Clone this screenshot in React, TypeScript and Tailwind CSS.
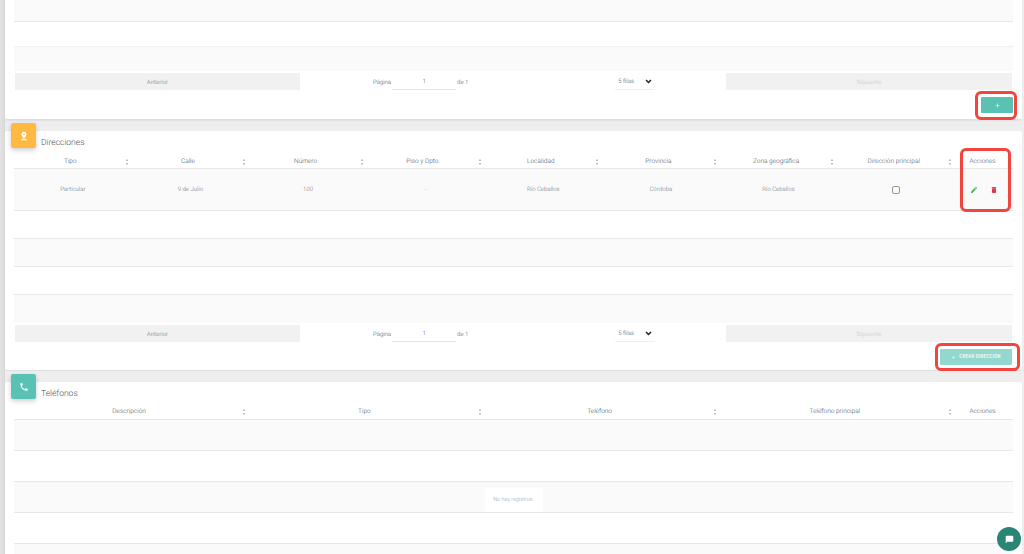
import { ReactNode } from 'react';
import { MdAdd, MdChatBubble, MdDelete, MdEdit, MdPhone, MdPinDrop } from 'react-icons/md';

const addressColumns = ['Tipo', 'Calle', 'Número', 'Piso y Dpto.', 'Localidad', 'Provincia', 'Zona geográfica', 'Dirección principal'];
const addressRow = ['Particular', '9 de Julio', '100', '-', 'Río Ceballos', 'Córdoba', 'Río Ceballos'];
const phoneColumns = ['Descripción', 'Tipo', 'Teléfono', 'Teléfono principal'];

function SortIcon() {
  return (
    <svg width="4" height="7" viewBox="0 0 4 7" className="absolute right-[3px] top-1/2 -translate-y-1/2 text-gray-400">
      <path d="M2 0.5 L3.2 2.2 H0.8 Z M2 6.5 L0.8 4.8 H3.2 Z" fill="currentColor" />
    </svg>
  );
}

function HeaderCell({ label }: { label: string }) {
  return (
    <div className="relative flex-1 pr-[5px] text-center text-[6.5px] font-light text-gray-600">
      {label}
      <SortIcon />
    </div>
  );
}

function ActionsHeader() {
  return <div className="w-[58px] pr-[3px] text-center text-[6.5px] font-light text-gray-600">Acciones</div>;
}

function EmptyRow({ height, striped, children }: { height: string; striped?: boolean; children?: ReactNode }) {
  return (
    <div className={`${height} ${striped ? 'bg-[#fafafa]' : 'bg-white'} flex items-center justify-center border-b border-[#e8e8e8]`}>
      {children}
    </div>
  );
}

function Pagination() {
  return (
    <div className="mt-[2px] flex h-[17px] items-center">
      <div className="ml-px flex h-full w-[285px] items-center justify-center bg-[#f1f1f1] pt-px text-[6px] text-gray-400">Anterior</div>
      <div className="flex h-full flex-1 items-center pt-px text-[6px] font-light text-gray-600">
        <span className="ml-[73px]">Página</span>
        <span className="ml-px flex h-[16px] w-[64px] items-center justify-center border-b border-[#e4e4e4]">1</span>
        <span className="ml-px">de 1</span>
        <div className="ml-[147px] flex h-[16px] w-[40px] items-center justify-between border-b border-[#f0f0f0] pl-[3px] pr-[3px] text-[6px]">
          <span>5 filas</span>
          <svg width="7" height="5" viewBox="0 0 7 5">
            <path d="M1 1 L3.5 3.5 L6 1" fill="none" stroke="#222" strokeWidth="1.5" />
          </svg>
        </div>
      </div>
      <div className="mr-px flex h-full w-[286px] items-center justify-center bg-[#f1f1f1] pt-px text-[6px] text-gray-300">Siguiente</div>
    </div>
  );
}

function SectionTitle({ title, tile, icon }: { title: string; tile: string; icon: ReactNode }) {
  return (
    <>
      <div className={`absolute -top-[8px] left-[6px] flex h-[25px] w-[25px] items-center justify-center rounded-[2px] text-white shadow-[0_2px_5px_rgba(0,0,0,0.2)] ${tile}`}>
        {icon}
      </div>
      <div className="pl-[27px] pt-px text-[8.5px] font-light leading-[13px] text-gray-600">{title}</div>
    </>
  );
}

export default function App() {
  return (
    <div className="relative h-[554px] overflow-hidden bg-[#eeeeee] font-['Roboto',sans-serif] [text-rendering:geometricPrecision]">
      <div className="absolute bottom-0 left-0 top-0 w-[5px] bg-gradient-to-r from-[#e4e4e4] to-[#d8d8d8]" />

      <div className="ml-[5px] mr-[2px]">
        {/* Previous section, cut off by the top of the window */}
        <section className="h-[120px] rounded-b-[2px] border-b border-[#dedede] bg-white px-[9px] shadow-[0_1px_2px_rgba(0,0,0,0.06)]">
          <EmptyRow height="h-[22px]" striped />
          <div className="h-[24px] bg-white" />
          <div className="h-[25px] border-t border-[#f0f0f0] bg-[#fafafa]" />
          <Pagination />
          <div className="mt-[7px] flex justify-end">
            <button className="flex h-[16px] w-[32px] items-center justify-center rounded-[1px] bg-[#5bc2b3] text-white">
              <MdAdd size={7} />
            </button>
          </div>
        </section>

        {/* Direcciones */}
        <section className="relative mt-[11px] h-[240px] rounded-[2px] border-b border-[#dedede] bg-white px-[9px] pt-[5px]">
          <SectionTitle title="Direcciones" tile="bg-[#fdb942]" icon={<MdPinDrop size={10} />} />
          <div className="mt-[6px] flex h-[13px] items-center border-b border-[#e8e8e8]">
            {addressColumns.map((col) => (
              <HeaderCell key={col} label={col} />
            ))}
            <ActionsHeader />
          </div>
          <div className="flex h-[42px] items-center border-b border-[#e8e8e8] bg-[#fafafa]">
            {addressRow.map((value, i) => (
              <div key={i} className="flex-1 text-center text-[6px] font-light text-gray-500">
                {value}
              </div>
            ))}
            <div className="flex flex-1 justify-center">
              <span className="flex h-[8px] w-[8px] rounded-[2px] border border-[#999999] bg-[#fdfbf0]" />
            </div>
            <div className="flex w-[58px] items-center justify-center gap-[12px]">
              <MdEdit size={8} className="text-[#43b34a]" />
              <MdDelete size={8} className="text-[#e0364a]" />
            </div>
          </div>
          <EmptyRow height="h-[28px]" />
          <EmptyRow height="h-[28px]" striped />
          <EmptyRow height="h-[28px]" />
          <div className="h-[28px] bg-[#fafafa]" />
          <Pagination />
          <div className="mt-[7px] flex justify-end pr-px">
            <button className="flex h-[16px] w-[72px] items-center justify-center gap-[3px] rounded-[1px] bg-[#93d8ce] text-[4.5px] font-medium tracking-[0.2px] text-white">
              <MdAdd size={5} />
              CREAR DIRECCIÓN
            </button>
          </div>
        </section>

        {/* Teléfonos */}
        <section className="relative mt-[11px] h-[173px] rounded-[2px] bg-white px-[9px] pt-[5px]">
          <SectionTitle title="Teléfonos" tile="bg-[#59c2b4]" icon={<MdPhone size={10} />} />
          <div className="mt-[4px] flex h-[15px] items-center border-b border-[#e8e8e8]">
            {phoneColumns.map((col) => (
              <HeaderCell key={col} label={col} />
            ))}
            <ActionsHeader />
          </div>
          <EmptyRow height="h-[31px]" striped />
          <EmptyRow height="h-[31px]" />
          <EmptyRow height="h-[31px]" striped>
            <span className="flex h-[24px] w-[58px] items-center justify-center self-end bg-white text-[5.5px] font-light text-gray-400">
              No hay registros.
            </span>
          </EmptyRow>
          <EmptyRow height="h-[31px]" />
          <div className="h-[11px] bg-[#fafafa]" />
        </section>
      </div>

      {/* Red marks drawn over the screenshot */}
      <div className="pointer-events-none absolute left-[975px] top-[91px] h-[29px] w-[42px] rounded-[6px] border-[3px] border-[#f2453d]" />
      <div className="pointer-events-none absolute left-[960px] top-[148px] h-[64px] w-[51px] rounded-[6px] border-[3px] border-[#f2453d]" />
      <div className="pointer-events-none absolute left-[935px] top-[343px] h-[28px] w-[85px] rounded-[6px] border-[3px] border-[#f2453d]" />

      <button className="absolute left-[997px] top-[527px] flex h-[24px] w-[24px] items-center justify-center rounded-full bg-[#2a8576] text-white">
        <MdChatBubble size={9} />
      </button>
    </div>
  );
}
